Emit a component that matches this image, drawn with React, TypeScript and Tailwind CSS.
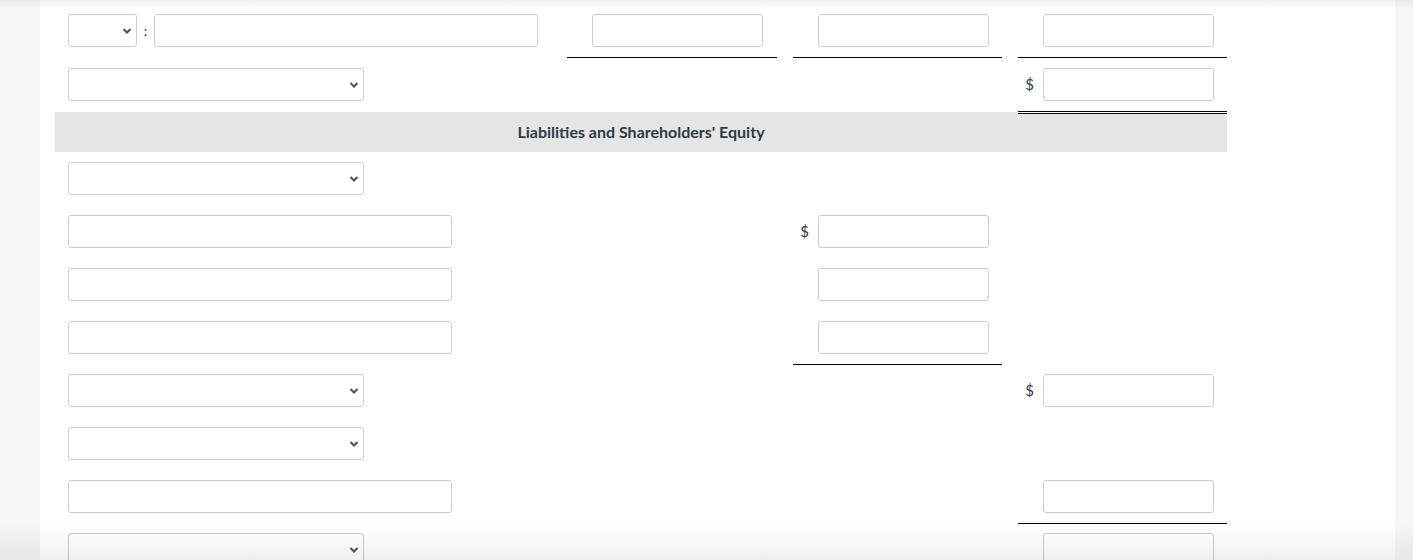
import React from "react";

const font = { fontFamily: "Lato, 'Open Sans', Arial, sans-serif" };

function Chevron() {
  return (
    <svg width="10" height="7" viewBox="0 0 10 7" className="absolute right-[4px] top-1/2 -translate-y-1/2 pointer-events-none">
      <polyline points="1.5,1.5 5,5 8.5,1.5" fill="none" stroke="#555" strokeWidth="2.2" />
    </svg>
  );
}

function Select({ w }: { w: string }) {
  return (
    <div className={`relative h-[33px] ${w} rounded-[3px] border border-[#c9cdd1] bg-white`}>
      <Chevron />
    </div>
  );
}

function TextInput({ w }: { w: string }) {
  return <div className={`h-[33px] ${w} rounded-[3px] border border-[#c9cdd1] bg-white`} />;
}

type Line = "none" | "single" | "double" | "border";

function Money({ dollar, line }: { dollar?: boolean; line?: Line }) {
  const lineCls =
    line === "single"
      ? "shadow-[0_1px_0_#000]"
      : line === "double"
      ? "relative z-10 shadow-[0_1px_0_#000,0_2px_0_#fff,0_3px_0_#000]"
      : line === "border"
      ? "border-b border-black"
      : "";
  return (
    <div className={`h-full pt-[10px] flex items-start ${lineCls}`}>
      <div className="w-[25px] h-[33px] flex items-center justify-end pr-[9px] text-[15px] text-[#2d3b45]">
        {dollar ? "$" : ""}
      </div>
      <TextInput w="w-[171px]" />
    </div>
  );
}

function Row({
  first,
  cols,
  h = "h-[53px]",
}: {
  first: React.ReactNode;
  cols: [React.ReactNode, React.ReactNode, React.ReactNode];
  h?: string;
}) {
  return (
    <div className={`grid grid-cols-[496px_210px_209px_209px] gap-x-4 ${h}`}>
      <div className="pt-[10px] pl-[13px]">{first}</div>
      <div className="h-full">{cols[0]}</div>
      <div className="h-full">{cols[1]}</div>
      <div className="h-full">{cols[2]}</div>
    </div>
  );
}

export default function App() {
  return (
    <div className="relative h-[560px] overflow-hidden bg-[#f6f6f6]" style={font}>
      <div className="ml-[40px] w-[1355px] h-full bg-white pl-[15px] pt-[4px]">
        <Row
          h="h-[54px]"
          first={
            <div className="flex items-center">
              <Select w="w-[69px]" />
              <span className="w-[17px] text-center text-[14px] text-[#2d3b45]">:</span>
              <TextInput w="w-[384px]" />
            </div>
          }
          cols={[<Money line="border" />, <Money line="border" />, <Money line="border" />]}
        />
        <Row first={<Select w="w-[296px]" />} cols={[null, null, <Money dollar line="double" />]} />
        <div className="mt-px h-[40px] w-[1172px] bg-[#e5e5e5] flex items-center justify-center">
          <span className="text-[16px] font-bold text-[#2d3b45]">Liabilities and Shareholders' Equity</span>
        </div>
        <Row first={<Select w="w-[296px]" />} cols={[null, null, null]} />
        <Row first={<TextInput w="w-[384px]" />} cols={[null, <Money dollar />, null]} />
        <Row first={<TextInput w="w-[384px]" />} cols={[null, <Money />, null]} />
        <Row first={<TextInput w="w-[384px]" />} cols={[null, <Money line="single" />, null]} />
        <Row first={<Select w="w-[296px]" />} cols={[null, null, <Money dollar />]} />
        <Row first={<Select w="w-[296px]" />} cols={[null, null, null]} />
        <Row first={<TextInput w="w-[384px]" />} cols={[null, null, <Money line="single" />]} />
        <Row first={<Select w="w-[296px]" />} cols={[null, null, <Money />]} />
      </div>
      <div className="absolute top-0 left-0 right-0 h-[8px] bg-linear-to-b from-black/[0.06] to-transparent pointer-events-none" />
      <div className="absolute bottom-0 left-0 right-0 h-[38px] bg-linear-to-b from-transparent to-black/[0.06] pointer-events-none" />
    </div>
  );
}
